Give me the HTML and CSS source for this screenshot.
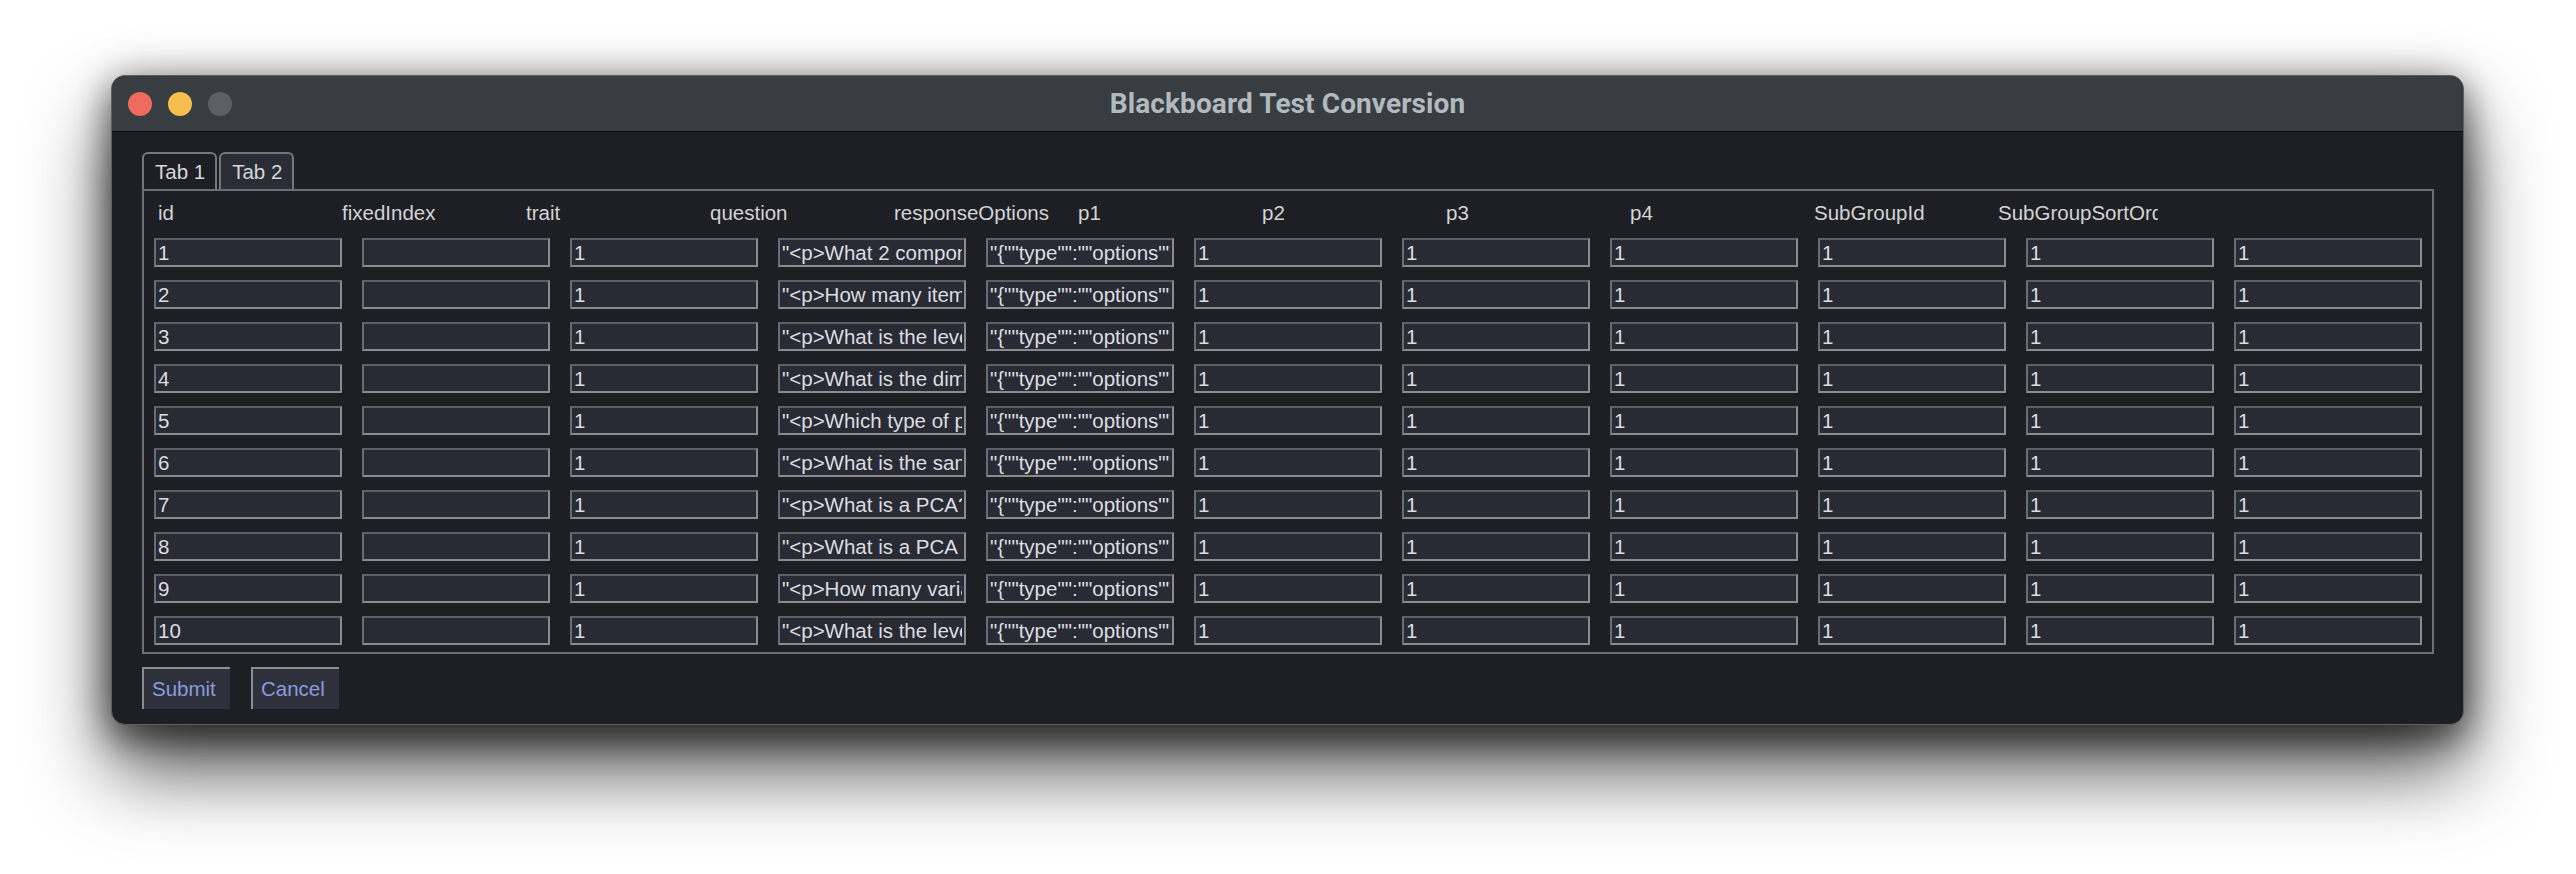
FILE: index.html
```html
<!DOCTYPE html>
<html>
<head>
<meta charset="utf-8">
<title>Blackboard Test Conversion</title>
<link rel="stylesheet" href="styles.css">
</head>
<body>
<div class="window">
  <div class="titlebar">
    <div class="lights">
      <span class="light red"></span>
      <span class="light yellow"></span>
      <span class="light gray"></span>
    </div>
    <div class="title">Blackboard Test Conversion</div>
    <div></div>
  </div>
  <div class="content">
    <div class="tabs">
      <div class="tab active">Tab 1</div>
      <div class="tab">Tab 2</div>
    </div>
    <div class="panel">
      <div class="labels">
        <span class="label">id</span>
        <span class="label">fixedIndex</span>
        <span class="label">trait</span>
        <span class="label">question</span>
        <span class="label">responseOptions</span>
        <span class="label">p1</span>
        <span class="label">p2</span>
        <span class="label">p3</span>
        <span class="label">p4</span>
        <span class="label">SubGroupId</span>
        <span class="label">SubGroupSortOrder</span>
      </div>
      <div class="rows" id="rows"></div>
    </div>
    <div class="buttons">
      <button class="btn">Submit</button>
      <button class="btn">Cancel</button>
    </div>
  </div>
</div>
<script src="app.js"></script>
</body>
</html>
```

FILE: app.js
```javascript
const questions = [
  '"<p>What 2 components make up a score?</p>"',
  '"<p>How many items are in the scale?</p>"',
  '"<p>What is the level of measurement?</p>"',
  '"<p>What is the dimensionality of the data?</p>"',
  '"<p>Which type of plot is used?</p>"',
  '"<p>What is the sample size needed?</p>"',
  '"<p>What is a PCA?</p>"',
  '"<p>What is a PCA used for?</p>"',
  '"<p>How many variables are there?</p>"',
  '"<p>What is the level of significance?</p>"'
];
const resp = '"{""type"":""options"",""options"":[]}"';
const rows = document.getElementById('rows');
for (let i = 0; i < 10; i++) {
  const row = document.createElement('div');
  row.className = 'row';
  const vals = [String(i + 1), '', '1', questions[i], resp, '1', '1', '1', '1', '1', '1'];
  vals.forEach(v => {
    const inp = document.createElement('input');
    inp.type = 'text';
    inp.className = 'field';
    inp.value = v;
    inp.readOnly = true;
    row.appendChild(inp);
  });
  rows.appendChild(row);
}
```

FILE: styles.css
```css
html, body {
  margin: 0;
  padding: 0;
  background: #ffffff;
}
body {
  padding: 75px 0 0 111px;
  min-height: 874px;
  box-sizing: border-box;
  font-family: "Liberation Sans", Arial, sans-serif;
}
.window {
  width: 2353px;
  box-sizing: border-box;
  border: 1px solid #5d5f62;
  border-radius: 14px;
  background: #1e1f24;
  overflow: hidden;
  box-shadow: 0 44px 80px rgba(0, 0, 0, 0.7), 0 14px 34px rgba(0, 0, 0, 0.45), 0 0 40px rgba(0, 0, 0, 0.25);
}
.titlebar {
  height: 55px;
  background: #373d41;
  border-bottom: 1px solid #0e0f11;
  display: grid;
  grid-template-columns: 1fr auto 1fr;
  align-items: center;
}
.lights {
  display: flex;
  gap: 16px;
  padding-left: 16px;
}
.light {
  width: 24px;
  height: 24px;
  border-radius: 50%;
  display: block;
}
.red { background: #ee6a5f; }
.yellow { background: #f5be4f; }
.gray { background: #5b6064; }
.title {
  font-family: Roboto, "Liberation Sans", sans-serif;
  font-weight: 700;
  font-size: 28px;
  color: #b3babd;
  letter-spacing: 0.1px;
}
.content {
  padding: 20px 29px 15px 30px;
}
.tabs {
  display: flex;
  gap: 2px;
  height: 37px;
}
.tab {
  box-sizing: border-box;
  height: 37px;
  padding: 0 10px 0 11px;
  border: 2px solid #76777b;
  border-bottom: none;
  border-radius: 6px 6px 0 0;
  color: #d6d7d9;
  font-size: 20.5px;
  line-height: 35px;
  white-space: nowrap;
  background: #2a2d36;
}
.tab.active {
  background: #1e1f24;
}
.panel {
  border: 2px solid #6e6f73;
  padding: 10px 10px 7px 10px;
}
.labels {
  display: flex;
  height: 24px;
  margin-bottom: 13px;
  padding-left: 4px;
}
.label {
  width: 160px;
  margin-right: 24px;
  flex: none;
  overflow: hidden;
  white-space: nowrap;
  font-size: 20.5px;
  line-height: 24px;
  color: #d2d3d5;
}
.rows {
  display: flex;
  flex-direction: column;
  gap: 13px;
}
.row {
  display: flex;
  gap: 20px;
}
.field {
  box-sizing: border-box;
  width: 188px;
  height: 29px;
  margin: 0;
  padding: 0 2px;
  border: 2px solid #8a8b8f;
  border-top-color: #5e6065;
  border-left-color: #6a6c71;
  background: #282b33;
  color: #dcdde0;
  font-family: "Liberation Sans", Arial, sans-serif;
  font-size: 20.5px;
  outline: none;
  border-radius: 0;
}
.buttons {
  display: flex;
  gap: 21px;
  margin-top: 13px;
}
.btn {
  box-sizing: border-box;
  width: 88px;
  height: 42px;
  margin: 0;
  padding: 0 0 0 8px;
  text-align: left;
  border: none;
  border-top: 2px solid #8b8c90;
  border-left: 2px solid #8b8c90;
  background: #2e313c;
  color: #8a9bdc;
  font-family: "Liberation Sans", Arial, sans-serif;
  font-size: 20.5px;
  line-height: 38px;
}
```
